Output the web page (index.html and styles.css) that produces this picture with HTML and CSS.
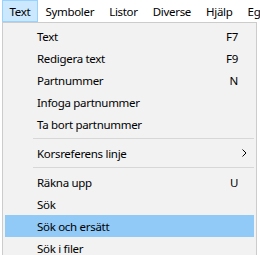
FILE: index.html
```html
<!DOCTYPE html>
<html lang="sv">
<head>
    <meta charset="UTF-8">
    <title>Text menu</title>
    <link rel="stylesheet" href="styles.css">
</head>
<body>
    <div class="menubar">
        <span class="menubar-item open">Text</span>
        <span class="menubar-item">Symboler</span>
        <span class="menubar-item">Listor</span>
        <span class="menubar-item">Diverse</span>
        <span class="menubar-item">Hjälp</span>
        <span class="menubar-item">Eg</span>
    </div>
    <div class="menu">
        <div class="menu-item"><span class="label">Text</span><span class="key">F7</span></div>
        <div class="menu-item"><span class="label">Redigera text</span><span class="key">F9</span></div>
        <div class="menu-item"><span class="label">Partnummer</span><span class="key">N</span></div>
        <div class="menu-item"><span class="label">Infoga partnummer</span></div>
        <div class="menu-item"><span class="label">Ta bort partnummer</span></div>
        <div class="separator"></div>
        <div class="menu-item">
            <span class="label">Korsreferens linje</span>
            <svg class="arrow" width="5" height="8" viewBox="0 0 5 8">
                <polyline points="0.5,0.5 4,4 0.5,7.5" fill="none" stroke="#000" stroke-width="1"/>
            </svg>
        </div>
        <div class="separator"></div>
        <div class="menu-item"><span class="label">Räkna upp</span><span class="key">U</span></div>
        <div class="menu-item"><span class="label">Sök</span></div>
        <div class="menu-item active"><span class="label">Sök och ersätt</span></div>
        <div class="menu-item"><span class="label">Sök i filer</span></div>
    </div>
</body>
</html>
```

FILE: styles.css
```css
body {
    margin: 0;
    background-color: #fff;
    font-family: "Noto Sans", "Open Sans", sans-serif;
    font-size: 11.5px;
    letter-spacing: -0.3px;
    color: #000;
    overflow: hidden;
}

.menubar {
    display: flex;
    height: 22px;
    padding-left: 2px;
    white-space: nowrap;
}

.menubar-item {
    display: flex;
    align-items: center;
    height: 22px;
    padding: 0 6.5px;
    border: 1px solid transparent;
    box-sizing: border-box;
}

.menubar-item.open {
    background-color: #cce8ff;
    border-color: #99d1ff;
}

.menu {
    margin-left: 2px;
    width: 255px;
    box-sizing: border-box;
    border: 1px solid #cccccc;
    background-color: #f2f2f2;
    padding: 2px;
}

.menu-item {
    display: grid;
    grid-template-columns: 32px 1fr auto 16px;
    align-items: center;
    height: 22px;
}

.menu-item .label {
    grid-column: 2;
}

.menu-item .key {
    grid-column: 3;
    text-align: right;
}

.menu-item .arrow {
    grid-column: 4;
    margin-left: 4px;
}

.menu-item.active {
    background-color: #91c9f7;
}

.separator {
    height: 7px;
    display: flex;
    align-items: center;
    padding-left: 28px;
}

.separator::after {
    content: "";
    flex: 1;
    height: 1px;
    background-color: #d7d7d7;
}
```
